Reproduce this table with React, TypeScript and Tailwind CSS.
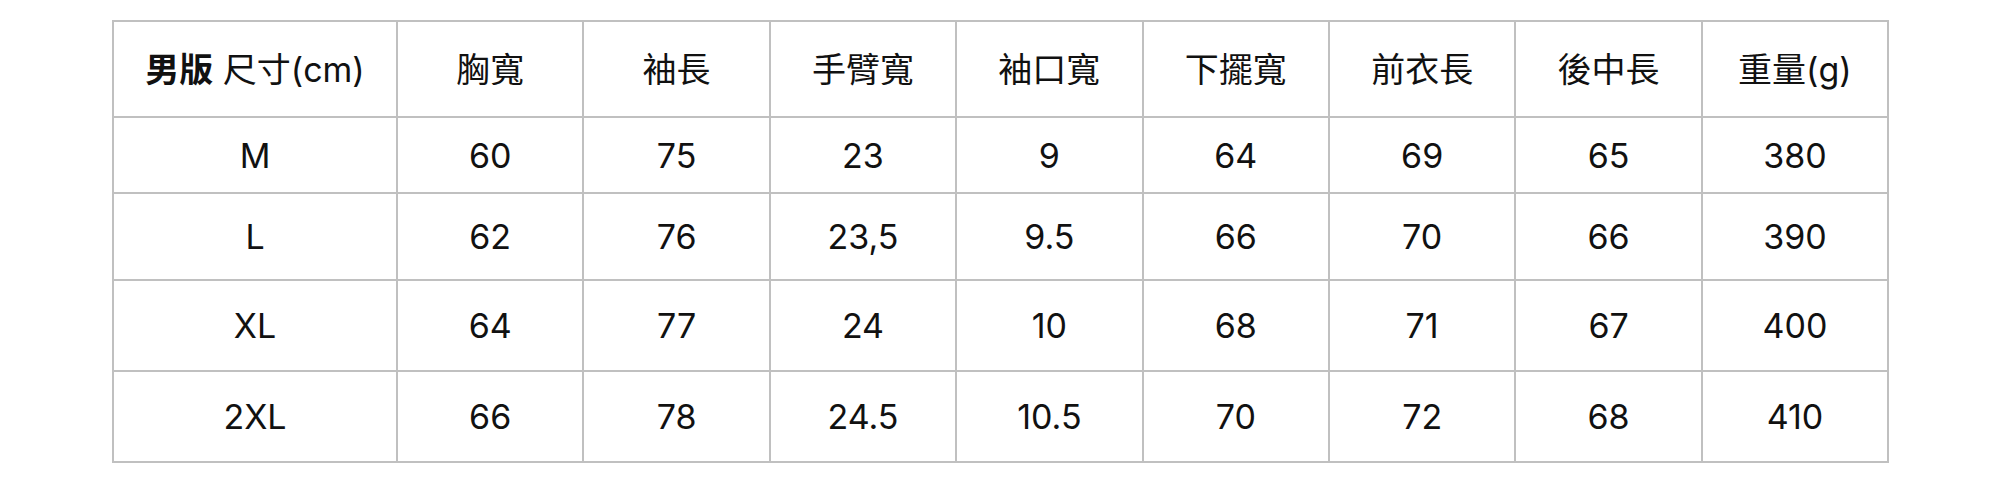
const headers = ['胸寬', '袖長', '手臂寬', '袖口寬', '下擺寬', '前衣長', '後中長', '重量(g)'];

const rows: { size: string; values: string[]; h: string }[] = [
  { size: 'M', values: ['60', '75', '23', '9', '64', '69', '65', '380'], h: 'h-[76px]' },
  { size: 'L', values: ['62', '76', '23,5', '9.5', '66', '70', '66', '390'], h: 'h-[87px]' },
  { size: 'XL', values: ['64', '77', '24', '10', '68', '71', '67', '400'], h: 'h-[91px]' },
  { size: '2XL', values: ['66', '78', '24.5', '10.5', '70', '72', '68', '410'], h: 'h-[91px]' },
];

const cell = 'border-2 border-[#c0c0c0] text-center align-middle';

export default function App() {
  return (
    <div
      className="w-[2000px] h-[487px] bg-white pt-[20px] pl-[112px] text-[#111] text-[34px]"
      style={{ fontFamily: 'Inter, "Noto Sans CJK TC", sans-serif' }}
    >
      <table className="table-fixed border-collapse w-[1775px]">
        <colgroup>
          <col className="w-[284px]" />
          {headers.map((h) => (
            <col key={h} className="w-[186.4px]" />
          ))}
        </colgroup>
        <thead>
          <tr className="h-[96px]">
            <th className={`${cell} font-normal`}>
              <span className="font-bold">男版</span> 尺寸(cm)
            </th>
            {headers.map((h) => (
              <th key={h} className={`${cell} font-normal`}>
                {h}
              </th>
            ))}
          </tr>
        </thead>
        <tbody>
          {rows.map((row) => (
            <tr key={row.size} className={row.h}>
              <td className={cell}>{row.size}</td>
              {row.values.map((v, i) => (
                <td key={i} className={cell}>
                  {v}
                </td>
              ))}
            </tr>
          ))}
        </tbody>
      </table>
    </div>
  );
}
